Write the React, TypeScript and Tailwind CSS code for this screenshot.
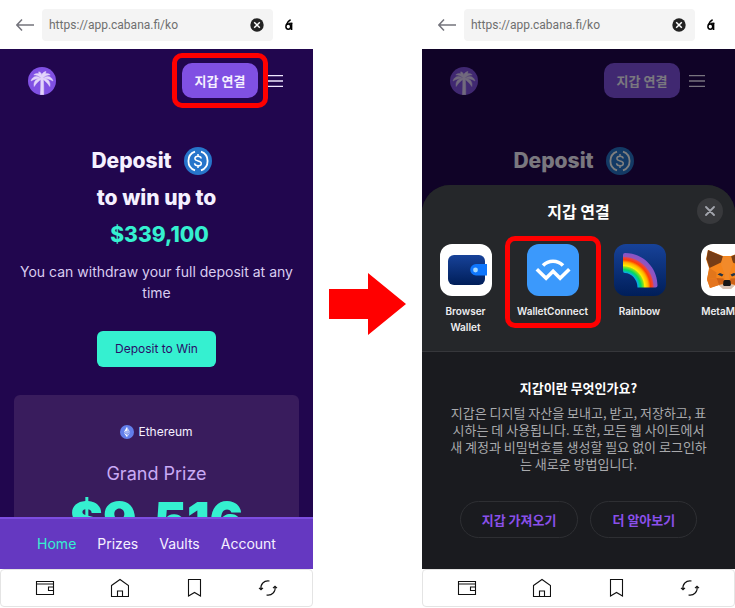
import type { ReactNode } from "react";

const KR = "font-['Noto_Sans_CJK_KR',sans-serif]";

function BackIcon() {
  return (
    <svg width="18" height="12" viewBox="0 0 18 12" fill="none" stroke="#74747c" strokeWidth="1.5" aria-hidden="true">
      <path d="M6 .6 .9 6 6 11.4M1 6h17" />
    </svg>
  );
}

function ClearIcon() {
  return (
    <svg width="14" height="14" viewBox="0 0 14 14" aria-hidden="true">
      <circle cx="7" cy="7" r="6.7" fill="#222" />
      <path d="m4.2 4.2 5.6 5.6m0-5.6L4.2 9.8" stroke="#fff" strokeWidth="1.5" />
    </svg>
  );
}

function BrandIcon() {
  return (
    <svg width="8" height="11" viewBox="0 0 8 11" fill="none" stroke="#000" aria-hidden="true">
      <ellipse cx="3.3" cy="7.6" rx="2.4" ry="2.6" strokeWidth="1.5" />
      <path d="M6.500 3.800V11" strokeWidth="1.700" />
      <path d="M1.300 6C2 4 3 2 5.600 .8" strokeWidth="1.500" />
      <path d="M3.500 4.300h3.800" strokeWidth="1.200" />
    </svg>
  );
}

function PalmLogo() {
  return (
    <svg width="28" height="28" viewBox="0 0 28 28" aria-label="Cabana" role="img">
      <circle cx="14" cy="14" r="14" fill="#8050e3" />
      <g fill="#e2d4fa" stroke="#e2d4fa" strokeWidth=".5" strokeLinejoin="round">
        <path d="M12.700 11h2.500c.5 5 .6 11 .5 16.700h-3.300c.4-6 .5-11.700.3-16.700z" />
        <path d="M14 11.500C13 7 9.500 5.200 5.800 7.800c3 .2 5.500 1.500 8.200 3.700z" />
        <path d="M14 12C9.500 8 4.500 8.800 3 14c3.500-2.200 7-2.500 11-2z" />
        <path d="M14 11.500c-5-.5-9 2.500-7.800 8 2.300-3.800 4.800-5.800 7.800-8z" />
        <path d="M14 11.500c1-4.500 4.500-6.300 8.200-3.700-3 .2-5.500 1.500-8.200 3.700z" />
        <path d="M14 12c4.500-4 9.500-3.200 11 2-3.500-2.200-7-2.500-11-2z" />
        <path d="M14 11.500c5-.5 9 2.500 7.800 8-2.300-3.800-4.800-5.800-7.800-8z" />
        <path d="M14.200 11.500c-2.500-2.500-4-5-3.400-6.700 2.300.5 3.500 2.500 3.400 6.700z" />
        <path d="M13.800 11.500c-.8-4 .8-6.300 4.200-7-.4 2.800-1.700 4.800-4.200 7z" />
      </g>
    </svg>
  );
}

function UsdcIcon() {
  return (
    <svg width="28" height="28" viewBox="0 0 28 28" fill="none" stroke="#fff" aria-label="USDC" role="img">
      <circle cx="14" cy="14" r="14" fill="#2775ca" stroke="none" />
      <path d="M11 4.600a10 10 0 0 0 0 18.800M17 4.600a10 10 0 0 1 0 18.800" strokeWidth="1.800" />
      <path d="M17.200 11.500c-.2-1.400-1.400-2.200-3.200-2.200-1.900 0-3.100.9-3.100 2.300 0 3.400 6.400 1.300 6.400 4.800 0 1.500-1.300 2.400-3.300 2.400s-3.300-.9-3.400-2.500M14 7v2.300m0 9.400V21" strokeWidth="1.500" />
    </svg>
  );
}

function MenuIcon() {
  return (
    <svg width="16" height="12" viewBox="0 0 16 12" stroke="#f0e8ff" strokeWidth="1.300" aria-hidden="true">
      <path d="M0 .7h16M0 6h16M0 11.300h16" />
    </svg>
  );
}

function EthIcon() {
  return (
    <svg width="14" height="14" viewBox="0 0 14 14" aria-hidden="true">
      <circle cx="7" cy="7" r="7" fill="#627eea" />
      <path d="M7 1.800v3.900l3.200 1.500z" fill="#c0cbf7" />
      <path d="M7 1.800 3.800 7.200 7 5.700z" fill="#fff" />
      <path d="M7 5.700 3.800 7.200 7 9.100l3.200-1.900z" fill="#a8b7f3" />
      <path d="M7 9.700v2.600l3.200-4.500z" fill="#c0cbf7" />
      <path d="M7 12.300V9.700L3.800 7.800z" fill="#fff" />
    </svg>
  );
}

function BrowserWalletIcon() {
  return (
    <svg width="52" height="52" viewBox="0 0 52 52" aria-hidden="true">
      <defs>
        <linearGradient id="bw" x2="0" y2="1">
          <stop stopColor="#174299" />
          <stop offset="1" stopColor="#001e59" />
        </linearGradient>
      </defs>
      <rect width="52" height="52" fill="#fff" />
      <rect x="8" y="11" width="37" height="30" rx="6" fill="url(#bw)" />
      <path d="M36 20h11v11.500H36a5.750 5.750 0 0 1 0-11.500z" fill="#0e76fd" />
      <circle cx="35.500" cy="26" r="2.400" fill="#a3d7ff" />
    </svg>
  );
}

function WalletConnectIcon() {
  return (
    <svg width="52" height="52" viewBox="0 0 52 52" aria-hidden="true">
      <rect width="52" height="52" fill="#3b99fc" />
      <path d="M16 21.500c5.500-5.600 14.500-5.600 20 0M9.800 25.300l9.300 9 7-7 7 7 9.200-9" fill="none" stroke="#fff" strokeWidth="3.600" />
    </svg>
  );
}

function RainbowIcon() {
  return (
    <svg width="52" height="52" viewBox="0 0 52 52" aria-hidden="true">
      <defs>
        <linearGradient id="rb" x2="0" y2="1">
          <stop stopColor="#174299" />
          <stop offset="1" stopColor="#001e59" />
        </linearGradient>
        <radialGradient id="arc" gradientUnits="userSpaceOnUse" cx="9" cy="43.500" r="34.500">
          <stop offset=".42" stopColor="#0aa5ff" />
          <stop offset=".52" stopColor="#01da60" />
          <stop offset=".6" stopColor="#8fe020" />
          <stop offset=".63" stopColor="#fff000" />
          <stop offset=".73" stopColor="#ffae00" />
          <stop offset=".8" stopColor="#ff4000" />
          <stop offset=".87" stopColor="#e8434a" />
          <stop offset=".9" stopColor="#9455b8" />
          <stop offset="1" stopColor="#8754c9" />
        </radialGradient>
      </defs>
      <rect width="52" height="52" fill="url(#rb)" />
      <path d="M9 11q0-2 2-2c18 0 32.500 14.500 32.500 32.500q0 2-2 2h-18c0-8-6-14.500-12.500-14.500q-2 0-2-2z" fill="url(#arc)" />
    </svg>
  );
}

function MetaMaskIcon() {
  return (
    <svg width="52" height="52" viewBox="0 0 52 52" aria-hidden="true">
      <rect width="52" height="52" fill="#fff" />
      <path d="M7 6 22 12h8L45 6l2 9-3 9 2 12-3 8-9-3-4 3.500h-8L18 41l-9 3-3-8 2-12-3-9z" fill="#f6851b" />
      <path d="M7 6 22 12.500l-2 6L8.500 24 5.500 15z" fill="#763d16" />
      <path d="m45 6-15 6.500 2 6L43.500 24l3-9z" fill="#763d16" />
      <path d="m22 12.500 4 .5 4-.5 2 8-4 10v7h-4v-7l-4-10z" fill="#f28a2a" />
      <path d="m8.500 24 7 4.500V34L6 35zM43.500 24l-7 4.500V34l9.500 1z" fill="#e2761b" />
      <path d="m6 35 9.500-1 2.500 7-9 3zM46 35l-9.500-1-2.500 7 9 3z" fill="#e4751f" />
      <path d="m15.500 34 7 .5 1 4.500-5.500 2zM36.500 34l-7 .5-1 4.500 5.500 2z" fill="#cd6116" />
      <path d="m16.500 30.500 2.500-1.500 3.500 1.500-1.500 2zM35.500 30.500 33 29l-3.500 1.500 1.500 2z" fill="#233447" />
      <path d="m18 41 5-1h6l5 1-4 4h-8z" fill="#d7c1b3" />
      <path d="m22.500 37 1-1h5l1 1 .5 4-1 1h-6l-1-1z" fill="#161616" />
    </svg>
  );
}

function BrowserBar() {
  return (
    <header className="flex h-[49px] items-center bg-white pl-4 pr-5">
      <button aria-label="Back" className="shrink-0">
        <BackIcon />
      </button>
      <div className="ml-2 flex h-8 min-w-0 flex-1 items-center rounded-sm bg-[#f4f4f4] pl-[7px] pr-[9px]">
        <input
          aria-label="Address"
          defaultValue="https://app.cabana.fi/ko"
          className="min-w-0 flex-1 bg-transparent font-['Roboto',sans-serif] text-xs text-[#6f6f6f] outline-none"
        />
        <button aria-label="Clear address">
          <ClearIcon />
        </button>
      </div>
      <button aria-label="Open menu" className="ml-3">
        <BrandIcon />
      </button>
    </header>
  );
}

function BrowserTabs() {
  const icons: { label: string; art: ReactNode }[] = [
    { label: "Wallet", art: <path d="M1.500 3.500h17v13h-17zM1.500 6h17M18.500 9h-5v3.500h5" /> },
    { label: "Home", art: <path d="M2.500 7.500 11 1.500l8.500 6v11h-17zM8.500 18.500v-5.500h5v5.500" /> },
    { label: "Bookmarks", art: <path d="M4.500 1.500h12v16.500L10.500 14.500l-6 3.500z" /> },
    {
      label: "Reload",
      art: <path d="M3 11.500C2 6.500 6 2 11.500 3M17 8.500c1 5-3 9.500-8.500 8.500M1 9.800l2 2 2-2M15 10.200l2-2 2 2" />,
    },
  ];
  return (
    <footer className="flex h-[38px] items-center justify-between rounded-sm border border-[#e4e4e4] bg-white px-[34px]">
      {icons.map((i) => (
        <button key={i.label} aria-label={i.label}>
          <svg width="20" height="20" viewBox="0 0 20 20" fill="none" stroke="#111" strokeWidth="1.100" aria-hidden="true">
            {i.art}
          </svg>
        </button>
      ))}
    </footer>
  );
}

function SiteHeader({ marked = false }: { marked?: boolean }) {
  return (
    <div className="flex h-[63px] items-center justify-between pl-7 pr-[30px]">
      <PalmLogo />
      <div className="flex items-center gap-[9px]">
        <div className="relative">
          <button className={`block h-[35px] w-[76px] rounded-[10px] bg-[#8050e3] text-[13px] font-bold text-[#f5f0ff] ${KR}`}>지갑 연결</button>
          {marked && <div className="absolute -inset-[10px] z-10 rounded-[10px] border-[5px] border-[#ff0000]" />}
        </div>
        <button aria-label="Menu">
          <MenuIcon />
        </button>
      </div>
    </div>
  );
}

function Headline({ children }: { children?: ReactNode }) {
  return (
    <h1 className="mt-[30px] flex flex-col items-center text-[21px] font-extrabold leading-[37px] text-[#f5f0ff]">
      <span className="flex h-[37px] items-center gap-3 pr-[10px]">
        Deposit <UsdcIcon />
      </span>
      {children}
    </h1>
  );
}

function NavBar() {
  return (
    <nav className="flex h-[52px] shrink-0 items-center justify-center gap-[21px] border-t-2 border-[#7d4de0] bg-[#6538c1] text-sm text-[#f5f0ff]">
      <a href="#home" className="text-[#35f0d0]">Home</a>
      <a href="#prizes">Prizes</a>
      <a href="#vaults">Vaults</a>
      <a href="#account">Account</a>
    </nav>
  );
}

function DepositScreen() {
  return (
    <main className="flex h-[520px] flex-col bg-[#21064e]">
      <div className="min-h-0 flex-1 overflow-hidden">
        <SiteHeader marked />
        <Headline>
          <span>to win up to</span>
          <span className="pl-[6px] text-[#35f0d0]">$339,100</span>
        </Headline>
        <p className="mt-2 px-4 text-center text-sm leading-[21px] text-[#d9cdf0]">You can withdraw your full deposit at any time</p>
        <div className="mt-7 flex justify-center">
          <button className="h-9 rounded-md bg-[#35f0d0] px-[18px] text-xs text-[#2a0d68]">Deposit to Win</button>
        </div>
        <section className="mx-[14px] mt-7 flex flex-col items-center rounded-md bg-[#391c5d] pt-[27px]">
          <div className="flex items-center gap-1 text-xs leading-5 text-[#f5f0ff]">
            <EthIcon />
            Ethereum
          </div>
          <h2 className="mt-5 text-lg leading-6 text-[#c9aaf5]">Grand Prize</h2>
          <strong className="mt-1 text-[50px] font-black leading-[60px] text-[#35f0d0]">$9,516</strong>
        </section>
      </div>
      <NavBar />
    </main>
  );
}

const wallets: { name: ReactNode; icon: ReactNode; marked?: boolean }[] = [
  { name: <>Browser<br />Wallet</>, icon: <BrowserWalletIcon /> },
  { name: "WalletConnect", icon: <WalletConnectIcon />, marked: true },
  { name: "Rainbow", icon: <RainbowIcon /> },
  { name: "MetaMask", icon: <MetaMaskIcon /> },
];

function ConnectScreen() {
  return (
    <main className="relative h-[520px] overflow-hidden bg-[#21064e]">
      <SiteHeader />
      <Headline />
      <div className="absolute inset-0 flex flex-col justify-end bg-black/50">
        <div role="dialog" aria-label="지갑 연결" className="flex h-[384px] flex-col overflow-hidden rounded-t-[28px] bg-[#1a1b1f]">
          <div className="h-[167px] border-b border-[#36373b] bg-[#25272a]">
            <div className="grid h-[51px] grid-cols-[1fr_auto_1fr] items-center px-3">
              <h2 className={`col-start-2 text-base font-bold text-white ${KR}`}>지갑 연결</h2>
              <button aria-label="닫기" className="flex size-[26px] items-center justify-center justify-self-end rounded-full bg-[#38393c]">
                <svg width="10" height="10" viewBox="0 0 10 10" stroke="#a3a6ae" strokeWidth="1.800" strokeLinecap="round" aria-hidden="true">
                  <path d="m1 1 8 8m0-8L1 9" />
                </svg>
              </button>
            </div>
            <ul className="flex pt-2">
              {wallets.map((w, i) => (
                <li key={i} className="relative w-[87px] shrink-0">
                  <button className="flex w-full flex-col items-center text-[10px] font-semibold leading-4 text-[#eeeef0]">
                    <span className="mb-[7px] block size-[52px] overflow-hidden rounded-xl">{w.icon}</span>
                    <span>{w.name}</span>
                  </button>
                  {w.marked && <div className="absolute -left-1 -right-[5px] -top-2 h-[92px] rounded-[10px] border-[5px] border-[#ff0000]" />}
                </li>
              ))}
            </ul>
          </div>
          <div className="flex flex-1 flex-col items-center px-7 pt-[26px] text-center">
            <h3 className={`text-[13px] font-bold leading-5 text-white ${KR}`}>지갑이란 무엇인가요?</h3>
            <p className={`mt-[6px] break-all text-[13px] leading-[17px] text-[#a9aaad] ${KR}`}>
              지갑은 디지털 자산을 보내고, 받고, 저장하고, 표시하는 데 사용됩니다. 또한, 모든 웹 사이트에서 새 계정과 비밀번호를 생성할 필요 없이 로그인하는 새로운 방법입니다.
            </p>
            <div className={`mt-[29px] flex gap-3 text-[13px] font-bold text-[#8a50ea] ${KR}`}>
              <button className="h-[37px] rounded-full border border-[#2e2f33] px-[21px]">지갑 가져오기</button>
              <button className="h-[37px] rounded-full border border-[#2e2f33] px-[21px]">더 알아보기</button>
            </div>
          </div>
        </div>
      </div>
    </main>
  );
}

export default function App() {
  return (
    <div className="grid min-h-screen grid-cols-[minmax(0,1fr)_109px_minmax(0,1fr)] items-start bg-white font-['Inter','Noto_Sans_CJK_KR',sans-serif]">
      <div>
        <BrowserBar />
        <DepositScreen />
        <BrowserTabs />
      </div>
      <div className="flex h-[608px] items-center justify-center">
        <svg width="77" height="62" viewBox="0 0 77 62" fill="#ff0000" aria-hidden="true">
          <path d="M0 16h39V0l38 31-38 31V46H0z" />
        </svg>
      </div>
      <div>
        <BrowserBar />
        <ConnectScreen />
        <BrowserTabs />
      </div>
    </div>
  );
}
